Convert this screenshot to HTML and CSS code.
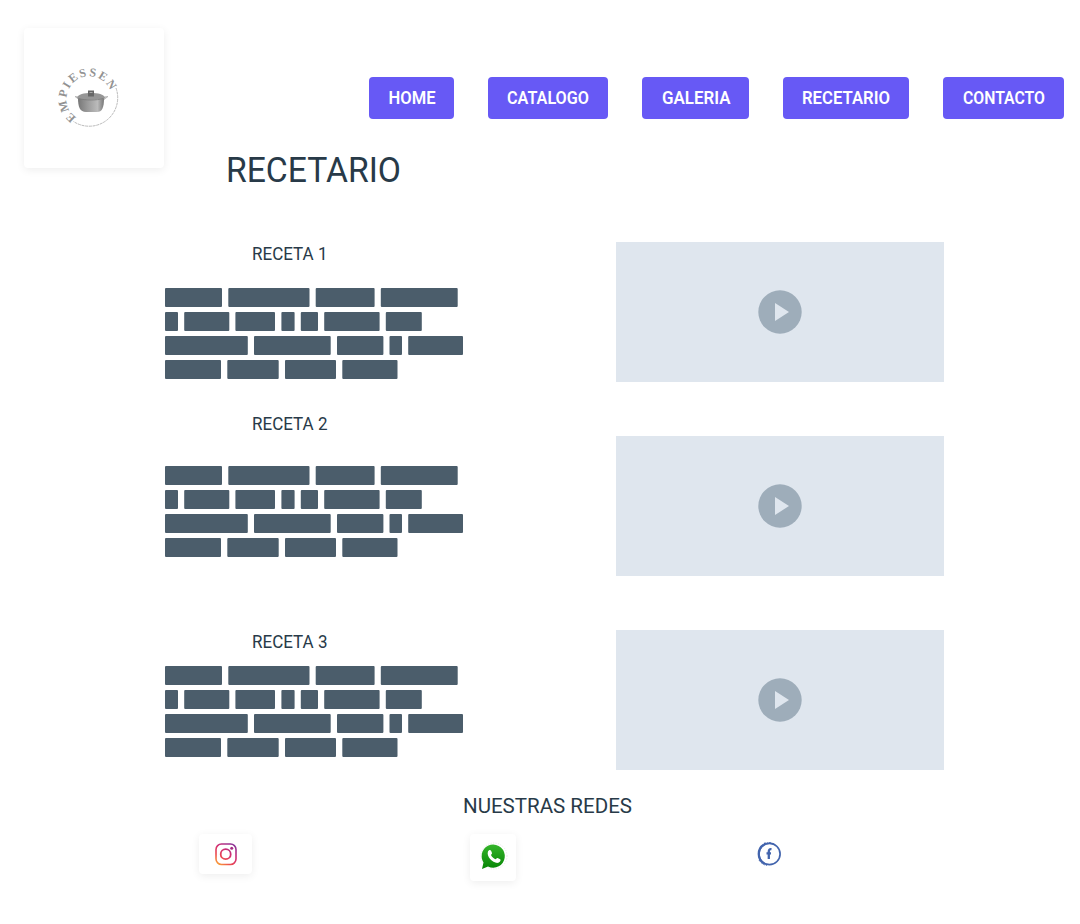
FILE: index.html
```html
<!DOCTYPE html>
<html lang="es">
<head>
<meta charset="utf-8">
<title>Recetario</title>
<link rel="stylesheet" href="styles.css">
</head>
<body>
<svg class="defs" aria-hidden="true">
  <symbol id="copy" viewBox="0 0 298 91">
    <rect x="0" y="0" width="57" height="19" rx="1"/><rect x="63.3" y="0" width="81.2" height="19" rx="1"/><rect x="150.7" y="0" width="58.9" height="19" rx="1"/><rect x="215.8" y="0" width="76.9" height="19" rx="1"/>
    <rect x="0" y="24" width="13" height="19" rx="1"/><rect x="19.2" y="24" width="45.1" height="19" rx="1"/><rect x="70.4" y="24" width="39.6" height="19" rx="1"/><rect x="116.4" y="24" width="13.2" height="19" rx="1"/><rect x="135.8" y="24" width="17.2" height="19" rx="1"/><rect x="159.2" y="24" width="55.4" height="19" rx="1"/><rect x="220.8" y="24" width="36" height="19" rx="1"/>
    <rect x="0" y="48" width="82.8" height="19" rx="1"/><rect x="89" y="48" width="76.7" height="19" rx="1"/><rect x="172" y="48" width="46.4" height="19" rx="1"/><rect x="224.5" y="48" width="12.5" height="19" rx="1"/><rect x="243.2" y="48" width="54.8" height="19" rx="1"/>
    <rect x="0" y="72" width="56" height="19" rx="1"/><rect x="62.3" y="72" width="51.4" height="19" rx="1"/><rect x="120" y="72" width="51" height="19" rx="1"/><rect x="177.3" y="72" width="55.2" height="19" rx="1"/>
  </symbol>
  <symbol id="play" viewBox="0 0 44 44">
    <circle cx="22" cy="22" r="21.7" fill="#9eadba"/><path d="M17 13v18l14-9z" fill="#dfe6ee"/>
  </symbol>
</svg>
<header class="header">
  <div class="card logo">
    <svg width="76" height="76" viewBox="50 60 76 76">
      <defs>
        <path id="ring" d="M76.500 117.500A22.500 22.500 0 1 1 111.300 95.500"/>
        <linearGradient id="steel"><stop offset="0" stop-color="#777"/><stop offset=".35" stop-color="#999"/><stop offset=".75" stop-color="#bbb"/><stop offset="1" stop-color="#777"/></linearGradient>
      </defs>
      <text class="logo-text"><textPath href="#ring" textLength="84" lengthAdjust="spacing">EMPIESSEN</textPath></text>
      <path d="M116 88A28.500 28.500 0 0 1 73.500 121.500" fill="none" stroke="#aaa" stroke-width=".8" stroke-dasharray="3 .7"/>
      <path d="M75 96.500l4 .5v2.500zM108 96.500l-4 .5v2.500z" fill="#ccc" stroke="#aaa" stroke-width=".7"/>
      <path d="M78 98h26c0 10-2 14-7 14H86c-6 0-8-5-8-14z" fill="url(#steel)"/>
      <path d="M77 98c1-4 7-5 14-5s13 1 14 5c-5 2-23 2-28 0z" fill="#969696"/>
      <path d="M79 98.500c6 2 18 2 24 0" fill="none" stroke="#777" stroke-width=".7"/>
      <path d="M88 90.500h6v6h-6z" fill="#666"/><path d="M89.500 92.500h3" stroke="#aaa"/>
    </svg>
  </div>
  <nav class="nav">
    <a class="btn home"><svg width="48" height="24"><text x="0.500" y="20" textLength="47" lengthAdjust="spacingAndGlyphs">HOME</text></svg></a>
    <a class="btn catalogo"><svg width="84" height="24"><text x="1" y="20" textLength="82" lengthAdjust="spacingAndGlyphs">CATALOGO</text></svg></a>
    <a class="btn galeria"><svg width="70" height="24"><text x="1" y="20" textLength="68.500" lengthAdjust="spacingAndGlyphs">GALERIA</text></svg></a>
    <a class="btn recetario"><svg width="90" height="24"><text x="1" y="20" textLength="88" lengthAdjust="spacingAndGlyphs">RECETARIO</text></svg></a>
    <a class="btn contacto"><svg width="84" height="24"><text x="1" y="20" textLength="82" lengthAdjust="spacingAndGlyphs">CONTACTO</text></svg></a>
  </nav>
</header>
<h1 class="title"><svg width="180" height="44"><text x="0" y="32" textLength="175" lengthAdjust="spacingAndGlyphs">RECETARIO</text></svg></h1>
<main class="content">
  <div class="recipes">
    <section class="recipe one"><h2><svg width="80" height="20"><text x="0" y="16" textLength="75.500" lengthAdjust="spacingAndGlyphs">RECETA 1</text></svg></h2><svg class="copy"><use href="#copy"/></svg></section>
    <section class="recipe two"><h2><svg width="80" height="20"><text x="0" y="16" textLength="75.500" lengthAdjust="spacingAndGlyphs">RECETA 2</text></svg></h2><svg class="copy"><use href="#copy"/></svg></section>
    <section class="recipe three"><h2><svg width="80" height="20"><text x="0" y="16" textLength="75.500" lengthAdjust="spacingAndGlyphs">RECETA 3</text></svg></h2><svg class="copy"><use href="#copy"/></svg></section>
  </div>
  <div class="videos">
    <div class="video"><svg width="44" height="44"><use href="#play"/></svg></div>
    <div class="video"><svg width="44" height="44"><use href="#play"/></svg></div>
    <div class="video"><svg width="44" height="44"><use href="#play"/></svg></div>
  </div>
</main>
<footer class="footer">
  <h3><svg width="174" height="26"><text x="0" y="18" textLength="169" lengthAdjust="spacingAndGlyphs">NUESTRAS REDES</text></svg></h3>
  <div class="social">
    <a class="card instagram">
      <svg width="22" height="22" viewBox="0 0 22 22" fill="none" stroke="url(#ig)">
        <defs><linearGradient id="ig" gradientUnits="userSpaceOnUse" x1="2" y1="22" x2="18" y2="0"><stop offset="0" stop-color="#fbad35"/><stop offset=".3" stop-color="#ec4a4f"/><stop offset=".6" stop-color="#d22e74"/><stop offset="1" stop-color="#85349b"/></linearGradient></defs>
        <rect x="1" y="1" width="20" height="20.500" rx="5.500" stroke-width="1.600"/><circle cx="10.700" cy="11.200" r="5" stroke-width="1.800"/><circle cx="16.700" cy="5.300" r="1.500" fill="#a52e83" stroke="none"/>
      </svg>
    </a>
    <a class="card whatsapp">
      <svg width="28" height="28" viewBox="0 0 28 28">
        <defs><linearGradient id="wa" x2="0" y2="1"><stop offset="0" stop-color="#35b52a"/><stop offset="1" stop-color="#078506"/></linearGradient></defs>
        <circle cx="15" cy="13" r="13" fill="none" stroke="#ddd" stroke-width=".7" stroke-dasharray="1 1.500"/>
        <path d="M3 26l1.500-6.500A11.600 11.600 0 1 1 9 23.500z" fill="url(#wa)"/>
        <path d="M9 8.500c1-2 2.500-2 3.200-.5l.8 2c.3.8-.8 1.500-1 2 1 2 2.500 3.400 4.500 4.200.8-.2 1.300-1.500 2.100-1.200l2.600 1.300c1 .6 0 3-1.800 3.500C14.500 21 7 13.500 9 8.500z" fill="#fff"/>
      </svg>
    </a>
    <a class="facebook">
      <svg width="26" height="26" viewBox="0 0 26 26" fill="none" stroke="#4264ad">
        <circle cx="13.500" cy="13" r="10.600" stroke-width="1.700"/><path d="M8 3.500A11.200 11.200 0 0 0 8 22.500" stroke-width="2.200"/>
        <path d="M8 2.500l5-.8 5 1.200" stroke-width="1.300" stroke-dasharray="2 .6"/><path d="M3 19A12 12 0 0 0 11 24.500" stroke-width="1" stroke-dasharray="2 1"/>
        <path d="M12.800 18v-7.500c0-2 .8-2.500 2.700-2.300M10.500 12.400H15" stroke-width="2.300"/>
      </svg>
    </a>
  </div>
</footer>
</body>
</html>
```
FILE: styles.css
```css
body { margin: 0; width: 1080px; height: 924px; overflow: hidden; background: #fff; color: #283a48; font-family: Roboto, "Liberation Sans", sans-serif; }
svg { display: block; flex: none; overflow: visible; }
svg text { fill: currentColor; }
h1, h2, h3 { margin: 0; font-weight: 400; }
.defs { display: none; }
.card { box-sizing: border-box; background: #fff; border-radius: 4px; box-shadow: 0 2px 8px rgba(0, 0, 0, .07); }
.header { display: flex; height: 150px; }
.logo { width: 140px; height: 140px; margin: 28px 0 0 24px; padding: 32px 26px; }
svg .logo-text { font: bold 12px "Liberation Serif", serif; fill: #929292; }
.nav { display: flex; gap: 34px; margin: 77px 0 0 205px; }
.btn { display: flex; align-items: center; justify-content: center; height: 42px; border-radius: 4px; background: #6759f5; color: #fff; font-size: 18.3px; font-weight: 600; }
.btn svg { margin-top: -4px; }
.home { width: 85px; }
.catalogo { width: 120px; }
.galeria { width: 107px; }
.recetario { width: 126px; }
.contacto { width: 121px; }
.title { height: 92px; padding-left: 226px; box-sizing: border-box; font-size: 35.5px; }
.content { display: flex; height: 528px; }
.recipes { width: 298px; margin-left: 165px; }
.recipe h2 { margin-left: 86.5px; font-size: 18px; }
.copy { width: 298px; height: 91px; fill: #4b5d6b; }
.one { padding-top: 2px; }
.one .copy { margin-top: 24px; }
.two { padding-top: 35px; }
.two .copy { margin-top: 32px; }
.three { padding-top: 75px; }
.three .copy { margin-top: 14px; }
.videos { display: flex; flex-direction: column; gap: 54px; margin-left: 153px; }
.video { display: flex; align-items: center; justify-content: center; width: 328px; height: 140px; background: #dfe6ee; }
.footer { padding-top: 25px; }
.footer h3 { margin-left: 463px; font-size: 21px; }
.social { display: flex; align-items: flex-start; margin: 13px 0 0 199px; }
.instagram { width: 53px; height: 40px; padding: 9px 0 0 15.5px; }
.whatsapp { width: 46px; height: 47px; margin-left: 218px; padding: 9px 0 0 9px; }
.facebook { margin: 7px 0 0 240px; }
```
